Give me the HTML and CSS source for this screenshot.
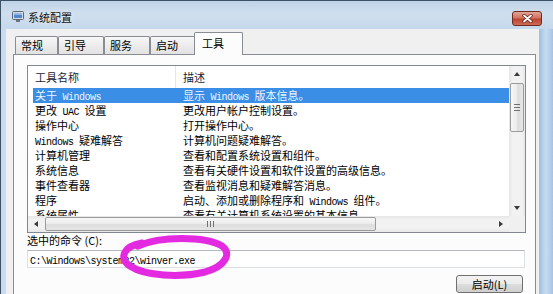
FILE: index.html
```html
<!DOCTYPE html>
<html lang="zh-CN">
<head>
    <meta charset="UTF-8" />
    <title>系统配置</title>
    <link rel="stylesheet" href="styles.css">
</head>
<body>
<div class="window">
    <div class="titlebar">
        <svg class="app-icon" width="12" height="11" viewBox="0 0 12 11">
            <rect x="0.5" y="0.5" width="11" height="8" rx="1" fill="#d9dde3" stroke="#5b6470" />
            <rect x="2" y="2" width="8" height="5" fill="#4f86cf" />
            <rect x="2" y="2" width="8" height="2" fill="#8fb6e6" />
            <rect x="4" y="9" width="4" height="2" fill="#6b7380" />
        </svg>
        <span class="title">系统配置</span>
        <button class="close-btn" type="button">
            <svg width="11" height="9" viewBox="0 0 11 9">
                <path d="M2 1.5 L9 7.5 M9 1.5 L2 7.5" stroke="#6b2318" stroke-width="3.4" stroke-linecap="round" />
                <path d="M2 1.5 L9 7.5 M9 1.5 L2 7.5" stroke="#fff" stroke-width="1.8" stroke-linecap="round" />
            </svg>
        </button>
    </div>

    <div class="frame">
        <div class="client">
            <!-- Pestañas -->
            <div class="tabs">
                <div class="tab first">常规</div>
                <div class="tab">引导</div>
                <div class="tab">服务</div>
                <div class="tab">启动</div>
                <div class="tab active">工具</div>
            </div>

            <div class="tab-page">
                <div class="listview">
                    <div class="lv-body">
                        <div class="lv-header">
                            <div class="lv-col name">工具名称</div>
                            <div class="lv-col">描述</div>
                        </div>
                        <div class="lv-row selected">
                            <div class="name">关于<span class="en"> Windows</span></div>
                            <div class="desc">显示<span class="en"> Windows </span>版本信息。</div>
                        </div>
                        <div class="lv-row">
                            <div class="name">更改<span class="en"> UAC </span>设置</div>
                            <div class="desc">更改用户帐户控制设置。</div>
                        </div>
                        <div class="lv-row">
                            <div class="name">操作中心</div>
                            <div class="desc">打开操作中心。</div>
                        </div>
                        <div class="lv-row">
                            <div class="name"><span class="en">Windows </span>疑难解答</div>
                            <div class="desc">计算机问题疑难解答。</div>
                        </div>
                        <div class="lv-row">
                            <div class="name">计算机管理</div>
                            <div class="desc">查看和配置系统设置和组件。</div>
                        </div>
                        <div class="lv-row">
                            <div class="name">系统信息</div>
                            <div class="desc">查看有关硬件设置和软件设置的高级信息。</div>
                        </div>
                        <div class="lv-row">
                            <div class="name">事件查看器</div>
                            <div class="desc">查看监视消息和疑难解答消息。</div>
                        </div>
                        <div class="lv-row">
                            <div class="name">程序</div>
                            <div class="desc">启动、添加或删除程序和<span class="en"> Windows </span>组件。</div>
                        </div>
                        <div class="lv-row">
                            <div class="name">系统属性</div>
                            <div class="desc">查看有关计算机系统设置的基本信息。</div>
                        </div>
                    </div>

                    <div class="vscroll">
                        <span class="sb-btn up"></span>
                        <span class="thumb"></span>
                        <span class="track"></span>
                        <span class="sb-btn down"></span>
                    </div>
                    <div class="hscroll">
                        <span class="sb-btn left"></span>
                        <span class="thumb"></span>
                        <span class="track"></span>
                        <span class="sb-btn right"></span>
                    </div>
                    <div class="corner"></div>
                </div>

                <div class="cmd-label">选中的命令 (C):</div>
                <div class="cmd-box"><span class="en">C:\Windows\system32\winver.exe</span></div>
                <div class="actions">
                    <button class="btn" type="button">启动(L)</button>
                </div>
            </div>
        </div>
    </div>

    <!-- marca a mano sobre la ruta -->
    <svg class="mark" width="553" height="294" viewBox="0 0 553 294">
        <path d="M138 246 C160 236, 205 236, 222 246 C232 253, 226 266, 205 272 C180 278, 145 276, 130 266 C118 258, 124 246, 142 243"
              fill="none" stroke="#e42ae0" stroke-width="7" stroke-linecap="round" />
    </svg>
</div>
</body>
</html>
```

FILE: styles.css
```css
/* Reset */
* {
    box-sizing: border-box;
    margin: 0;
    padding: 0;
}

body {
    width: 553px;
    height: 294px;
    overflow: hidden;
    font-family: "Noto Sans CJK SC", sans-serif;
    font-size: 11px;
    color: #000;
    background: #fff;
}

/* Window frame */
.window {
    position: relative;
    height: 294px;
    display: flex;
    flex-direction: column;
    border-top: 1px solid #3e5064;
    border-left: 1px solid #3e5064;
    background: #b6cde6;
}

.titlebar {
    height: 28px;
    flex: none;
    display: flex;
    align-items: center;
    padding: 3px 11px 0 11px;
    background: linear-gradient(180deg, #bfd2e7 0%, #cfdfee 45%, #c5d8ec 100%);
}

.app-icon {
    flex: none;
}

.title {
    margin-left: 4px;
    color: #111;
    text-shadow: 0 0 6px rgba(255, 255, 255, 0.9);
}

.close-btn {
    margin-left: auto;
    align-self: flex-start;
    margin-top: 7px;
    width: 30px;
    height: 15px;
    border: 1px solid #6e2b22;
    border-radius: 3px;
    background: linear-gradient(180deg, #e2a596 0%, #d2735f 45%, #bb4330 55%, #cd6d57 100%);
    display: flex;
    align-items: center;
    justify-content: center;
}

.frame {
    flex: 1;
    display: flex;
    padding: 0 14px 0 5px;
    background: linear-gradient(90deg, #c8daee 0, #c8daee 5px, #a0bedf calc(100% - 14px), #c8dcf0 calc(100% - 7px), #a7c3e3 100%);
}

.client {
    flex: 1;
    display: flex;
    flex-direction: column;
    background: #f0f0f0;
    padding: 3px 3px 0 7px;
}

/* Tabs */
.tabs {
    display: flex;
    align-items: flex-end;
    height: 22px;
    padding-left: 2px;
    position: relative;
    z-index: 1;
}

.tab {
    width: 46px;
    height: 18px;
    line-height: 16px;
    padding-left: 5px;
    border: 1px solid #898c95;
    border-bottom: none;
    border-radius: 2px 2px 0 0;
    background: linear-gradient(180deg, #f7f7f7 0%, #ececec 50%, #e2e2e2 100%);
}

.tab.first {
    width: 43px;
}

.tab.active {
    width: 49px;
    height: 23px;
    line-height: 20px;
    padding-left: 7px;
    margin: 0 -2px -1px;
    background: #fcfcfc;
}

.tab-page {
    flex: 1;
    border: 1px solid #898c95;
    border-bottom: none;
    background: #fcfcfc;
    padding: 10px 0 0 13px;
}

/* List view */
.listview {
    width: 499px;
    height: 168px;
    border: 1px solid #828790;
    background: #fff;
    display: grid;
    grid-template-columns: 1fr 16px;
    grid-template-rows: 1fr 16px;
}

.lv-body {
    overflow: hidden;
}

.lv-header {
    display: flex;
    height: 22px;
    line-height: 22px;
    color: #1b2533;
}

.lv-header .lv-col {
    padding-left: 7px;
}

.lv-header .lv-col.name {
    width: 148px;
    border-right: 1px solid #e3e6ea;
}

.lv-row {
    display: flex;
    height: 15px;
    line-height: 15px;
    margin-left: 5px;
    white-space: nowrap;
}

.lv-row .name {
    width: 148px;
    padding-left: 2px;
}

.lv-row .desc {
    padding-left: 2px;
}

.lv-row.selected {
    background: #3a8ee6;
    color: #eef5ff;
}

.en {
    font-family: "Liberation Mono", monospace;
    font-size: 10px;
    letter-spacing: -0.5px;
}

/* Scrollbars */
.vscroll,
.hscroll {
    display: flex;
    background: #efefef;
}

.vscroll {
    flex-direction: column;
    background: linear-gradient(90deg, #e6e6e6, #f2f2f2 25%, #f2f2f2 75%, #e8e8e8);
}

.hscroll {
    background: linear-gradient(180deg, #e6e6e6, #f2f2f2 25%, #f2f2f2 75%, #e8e8e8);
}

.sb-btn {
    flex: none;
    width: 16px;
    height: 16px;
    display: flex;
    align-items: center;
    justify-content: center;
}

.sb-btn::before {
    content: "";
    width: 0;
    height: 0;
}

.sb-btn.up::before {
    border-left: 3px solid transparent;
    border-right: 3px solid transparent;
    border-bottom: 4px solid #3a3a3a;
}

.sb-btn.down::before {
    border-left: 3px solid transparent;
    border-right: 3px solid transparent;
    border-top: 4px solid #3a3a3a;
}

.sb-btn.left::before {
    border-top: 3px solid transparent;
    border-bottom: 3px solid transparent;
    border-right: 4px solid #3a3a3a;
}

.sb-btn.right::before {
    border-top: 3px solid transparent;
    border-bottom: 3px solid transparent;
    border-left: 4px solid #3a3a3a;
}

.thumb {
    flex: none;
    border: 1px solid #9b9b9b;
    border-radius: 2px;
    display: flex;
    align-items: center;
    justify-content: center;
}

.vscroll .thumb {
    height: 49px;
    margin: 1px 1px 0;
    background: linear-gradient(90deg, #f7f7f7, #ededed 45%, #dedede 55%, #e6e6e6);
}

.vscroll .thumb::after {
    content: "";
    width: 6px;
    height: 7px;
    background: repeating-linear-gradient(180deg, #707070 0 1px, transparent 1px 3px);
}

.hscroll .thumb {
    width: 331px;
    margin: 1px 0 1px 1px;
    background: linear-gradient(180deg, #f7f7f7, #ededed 45%, #dedede 55%, #e6e6e6);
}

.hscroll .thumb::after {
    content: "";
    width: 7px;
    height: 6px;
    background: repeating-linear-gradient(90deg, #707070 0 1px, transparent 1px 3px);
}

.track {
    flex: 1;
}

.corner {
    background: #f0f0f0;
}

/* Command */
.cmd-label {
    height: 15px;
    line-height: 15px;
}

.cmd-box {
    width: 498px;
    height: 18px;
    margin-top: 2px;
    padding-left: 2px;
    line-height: 16px;
    border: 1px solid #dcdfe4;
    border-top-color: #b5b8bf;
    background: #fff;
}

.actions {
    width: 498px;
    display: flex;
    justify-content: flex-end;
    margin-top: 7px;
}

.btn {
    width: 67px;
    height: 18px;
    margin-right: 2px;
    font-family: "Noto Sans CJK SC", sans-serif;
    font-size: 11px;
    line-height: 16px;
    color: #000;
    border: 1px solid #707070;
    border-radius: 3px;
    background: linear-gradient(180deg, #f3f3f3 0%, #ebebeb 50%, #dddddd 50%, #cfcfcf 100%);
}

/* Annotation */
.mark {
    position: absolute;
    left: -1px;
    top: -1px;
    pointer-events: none;
}
```
